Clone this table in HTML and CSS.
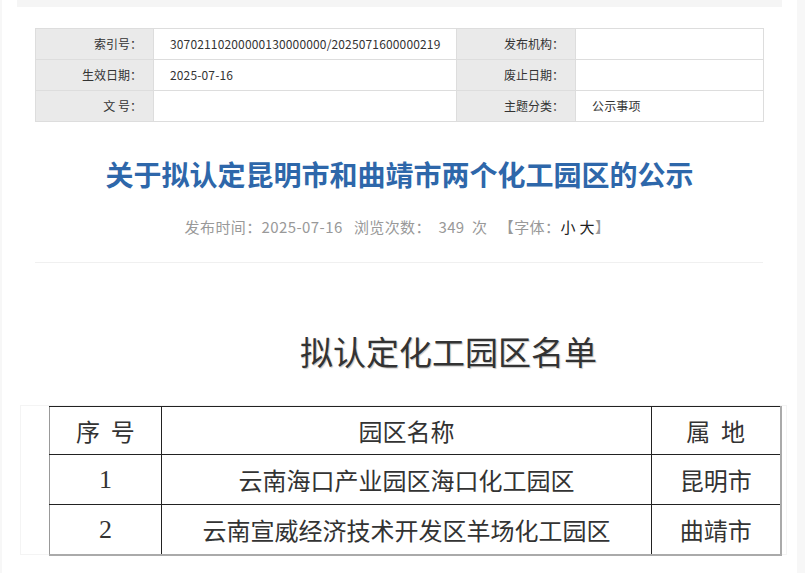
FILE: index.html
```html
<!DOCTYPE html>
<html lang="zh-CN">
<head>
<meta charset="utf-8">
<title>关于拟认定昆明市和曲靖市两个化工园区的公示</title>
<link rel="stylesheet" href="styles.css">
</head>
<body>
<div class="page">
  <div class="topbar"></div>
  <table class="info">
    <colgroup><col class="c1"><col class="c2"><col class="c3"><col class="c4"></colgroup>
    <tr>
      <th>索引号：</th><td>30702110200000130000000/2025071600000219</td>
      <th>发布机构：</th><td></td>
    </tr>
    <tr>
      <th>生效日期：</th><td>2025-07-16</td>
      <th>废止日期：</th><td></td>
    </tr>
    <tr>
      <th>文&nbsp;号：</th><td></td>
      <th>主题分类：</th><td>公示事项</td>
    </tr>
  </table>
  <h1 class="title">关于拟认定昆明市和曲靖市两个化工园区的公示</h1>
  <div class="meta">发布时间：2025-07-16&nbsp;&nbsp;&nbsp;浏览次数：&nbsp; 349&nbsp; 次&nbsp;&nbsp;&nbsp;【字体：<span class="dark">小 大</span>】</div>
  <div class="sep"></div>
  <h2 class="heading">拟认定化工园区名单</h2>
  <div class="wrap">
    <table class="list">
      <colgroup><col class="k1"><col class="k2"><col class="k3"></colgroup>
      <tr class="head"><td>序&nbsp;&nbsp;号</td><td>园区名称</td><td>属&nbsp;&nbsp;地</td></tr>
      <tr><td class="num">1</td><td>云南海口产业园区海口化工园区</td><td>昆明市</td></tr>
      <tr><td class="num">2</td><td>云南宣威经济技术开发区羊场化工园区</td><td>曲靖市</td></tr>
    </table>
  </div>
</div>
</body>
</html>
```
FILE: styles.css
```css
html, body {
  margin: 0;
  padding: 0;
  background: #f7f7f7;
}
body {
  font-family: "Noto Sans CJK SC", "Noto Sans", sans-serif;
  color: #333;
}
.page {
  margin-left: 2px;
  width: 795px;
  height: 573px;
  background: #fff;
  overflow: hidden;
}
.topbar {
  margin: 0 15px;
  height: 7px;
  background: #f5f5f5;
}
.info {
  margin: 21px 0 0 33px;
  width: 728px;
  table-layout: fixed;
  border-collapse: collapse;
  font-size: 12px;
  border: 1px solid #ddd;
}
.info .c1 { width: 118px; }
.info .c2 { width: 303px; }
.info .c3 { width: 119px; }
.info .c4 { width: 188px; }
.info th, .info td {
  height: 30px;
  padding: 0;
  border: 1px solid #ddd;
  font-weight: normal;
  color: #333;
  line-height: 16px;
  white-space: nowrap;
}
.info th {
  background: #eaeaea;
  text-align: right;
  padding-right: 11px;
}
.info td {
  background: #fff;
  text-align: left;
  padding-left: 16px;
  letter-spacing: 0.15px;
}
.title {
  margin: 32px 0 0;
  text-align: center;
  font-size: 28px;
  line-height: 40px;
  font-weight: bold;
  color: #2e67aa;
}
.meta {
  margin-top: 23px;
  text-align: center;
  font-size: 15px;
  line-height: 20px;
  color: #999;
  letter-spacing: 0.4px;
  padding-right: 4px;
}
.meta .dark { color: #222; }
.sep {
  margin: 25px 34px 0 33px;
  height: 1px;
  background: #f0f0f0;
}
.heading {
  margin: 66px 0 0;
  padding-left: 98px;
  text-align: center;
  font-size: 33px;
  line-height: 44px;
  font-weight: normal;
  color: #333;
  text-shadow: 1px 1px 1px #c4c4c4;
}
.wrap {
  margin: 32px 10px 0 18px;
  border: 1px solid #f4f4f4;
  padding: 0 0 0 28px;
  height: 148px;
}
.list {
  width: 731px;
  table-layout: fixed;
  border-collapse: collapse;
  font-size: 24px;
  color: #333;
}
.list .k1 { width: 112px; }
.list .k2 { width: 490px; }
.list .k3 { width: 129px; }
.list td {
  border: 1px solid #222;
  text-align: center;
  padding: 0;
  height: 49px;
  line-height: 30px;
}
.list tr.head td { height: 47px; }
.list td:first-child { border-left-color: #999; }
.list td:last-child { border-right: 2px solid #aaa; }
.list tr:last-child td { border-bottom: 2px solid #aaa; }
.list td.num {
  font-family: "Liberation Serif", serif;
  font-size: 26px;
}
```
